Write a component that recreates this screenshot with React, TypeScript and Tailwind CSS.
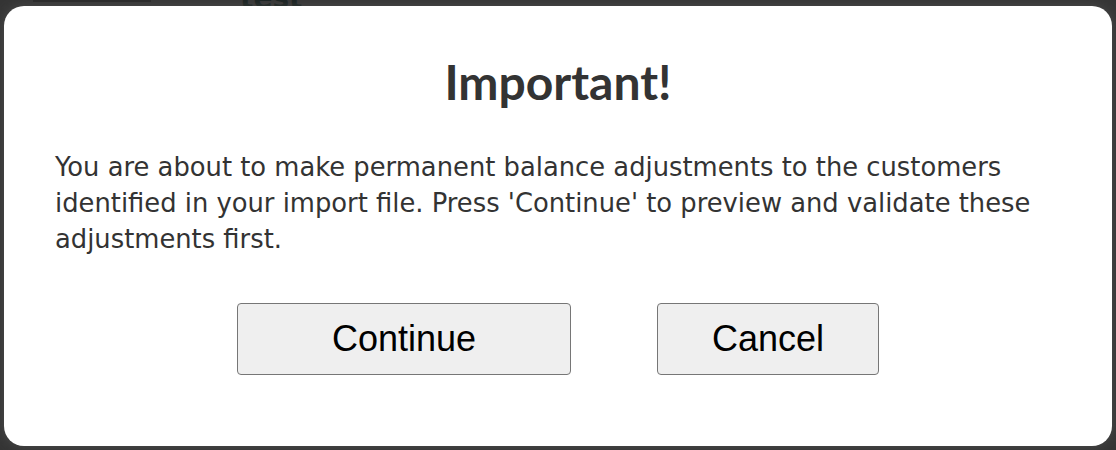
export default function App() {
  return (
    <div className="relative w-[1116px] h-[450px] overflow-hidden bg-[#353535] pl-[4px] pt-[6px]">
      {/* page behind the overlay */}
      <div className="absolute left-[33px] top-0 h-[2px] w-[118px] bg-[#262626]" />
      <div className="absolute left-[240px] top-[-22px] text-[28px] font-bold text-[#17201e] [font-family:'DejaVu_Sans',sans-serif]">
        test
      </div>

      <div className="relative flex h-[440px] w-[1108px] flex-col items-center rounded-[20px] bg-white pt-[52px] shadow-[0_0_12px_rgba(90,90,90,0.6)]">
        <h1 className="h-[48px] text-[48px] leading-[48px] font-bold text-[#333333] [font-family:Lato,sans-serif]">
          Important!
        </h1>

        <p className="mt-[43px] w-full px-[51px] text-[25.8px] leading-[36px] text-[#333333] [font-family:'DejaVu_Sans',sans-serif]">
          You are about to make permanent balance adjustments to the customers identified in your import file. Press
          'Continue' to preview and validate these adjustments first.
        </p>

        <div className="mt-[46px] flex gap-[86px]">
          <button className="h-[72px] w-[334px] rounded-[4px] border-[1.5px] border-[#767676] bg-[#efefef] text-[36px] text-black [font-family:'Liberation_Sans',Arial,sans-serif]">
            Continue
          </button>
          <button className="h-[72px] w-[222px] rounded-[4px] border-[1.5px] border-[#767676] bg-[#efefef] text-[36px] text-black [font-family:'Liberation_Sans',Arial,sans-serif]">
            Cancel
          </button>
        </div>
      </div>
    </div>
  )
}
